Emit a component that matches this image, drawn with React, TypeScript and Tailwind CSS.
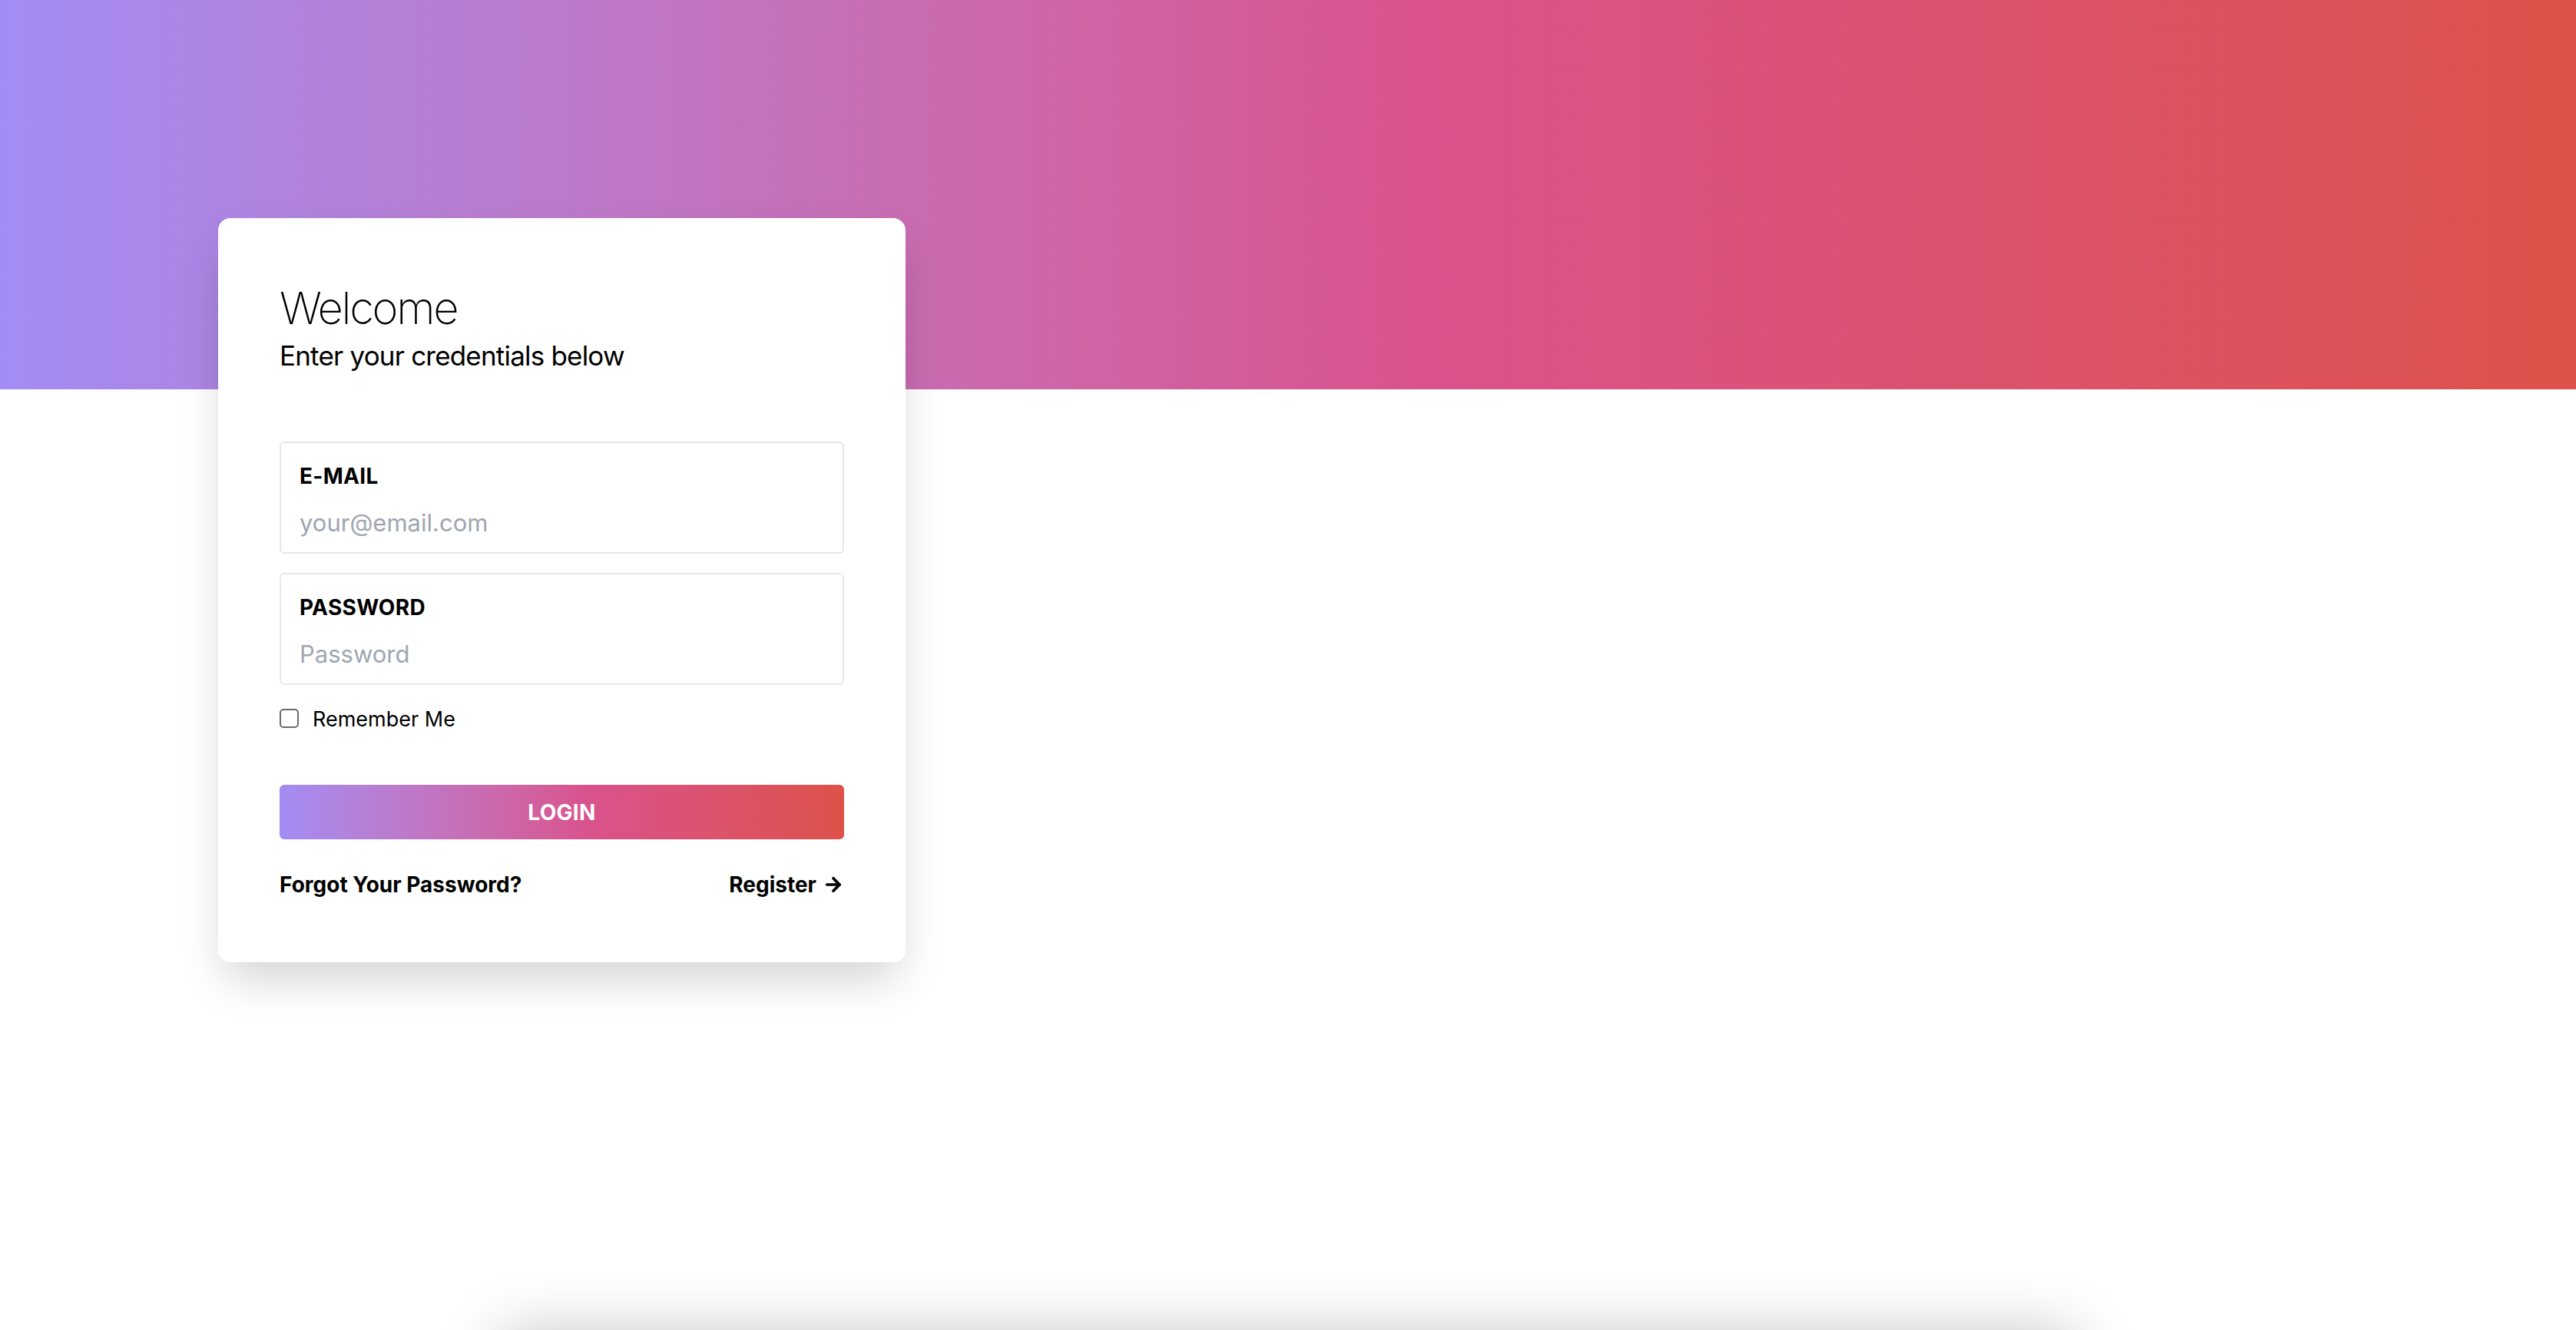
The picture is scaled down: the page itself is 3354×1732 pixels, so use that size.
import React from 'react'
import { ArrowRight } from 'lucide-react'

const Field = ({ label, placeholder, type }: { label: string; placeholder: string; type: string }) => {
    return (
        <div className="border-2 border-[#e6e7eb] rounded-[6px] px-6 pt-[23px] pb-[14px] mb-[25px]">
            <label className="block text-[28px] leading-[40px] font-bold text-black tracking-[0.3px]">{label}</label>
            <input
                type={type}
                placeholder={placeholder}
                className="block w-full mt-[17px] h-[48px] text-[31px] leading-[48px] text-black placeholder:text-[#a0a5b1] outline-none bg-transparent"
            />
        </div>
    )
}

export default function App() {
    return (
        <div className="min-h-screen bg-white font-['Inter','Liberation_Sans',sans-serif] text-black overflow-hidden">
            <div className="h-[507px] w-full bg-gradient-to-r from-[#a28cf3] via-[#d9528c] via-55% to-[#de5148]"></div>

            <div className="-mt-[223px] pl-[284px]">
                <div className="w-[895px] bg-white rounded-[16px] shadow-[0_30px_60px_-10px_rgba(0,0,0,0.18)] px-[80px] pt-[85px] pb-[81px]">
                    <h1 className="text-[58px] leading-[64px] font-extralight tracking-[-2.4px] text-black">Welcome</h1>
                    <p className="text-[35px] leading-[48px] mt-[6px] tracking-[-0.8px]">Enter your credentials below</p>

                    <form className="mt-[88px]">
                        <Field label="E-MAIL" placeholder="your@email.com" type="email" />
                        <Field label="PASSWORD" placeholder="Password" type="password" />

                        <label className="flex items-center gap-[18px] mt-[1px] h-[40px]">
                            <span className="w-[25px] h-[25px] border-2 border-[#6b6b6b] rounded-[5px] bg-white -mt-[3px]"></span>
                            <span className="text-[27px] leading-[40px]">Remember Me</span>
                        </label>

                        <button
                            type="button"
                            className="mt-[65px] w-full h-[71px] rounded-[6px] bg-gradient-to-r from-[#a38cf3] via-[#d9528c] via-55% to-[#de5148] text-white text-[28px] font-bold tracking-[0.3px]"
                        >
                            LOGIN
                        </button>

                        <div className="flex justify-between items-center mt-[39px] h-[40px]">
                            <a className="text-[28px] leading-[40px] font-bold">Forgot Your Password?</a>
                            <a className="flex items-center gap-[8px] text-[28px] leading-[40px] font-bold">
                                Register
                                <ArrowRight size={28} strokeWidth={3.2} />
                            </a>
                        </div>
                    </form>
                </div>
            </div>

            <div className="mt-[485px] mx-auto w-[2048px] h-[400px] bg-white rounded-[16px] shadow-[0_0_80px_rgba(0,0,0,0.25)]"></div>
        </div>
    )
}
